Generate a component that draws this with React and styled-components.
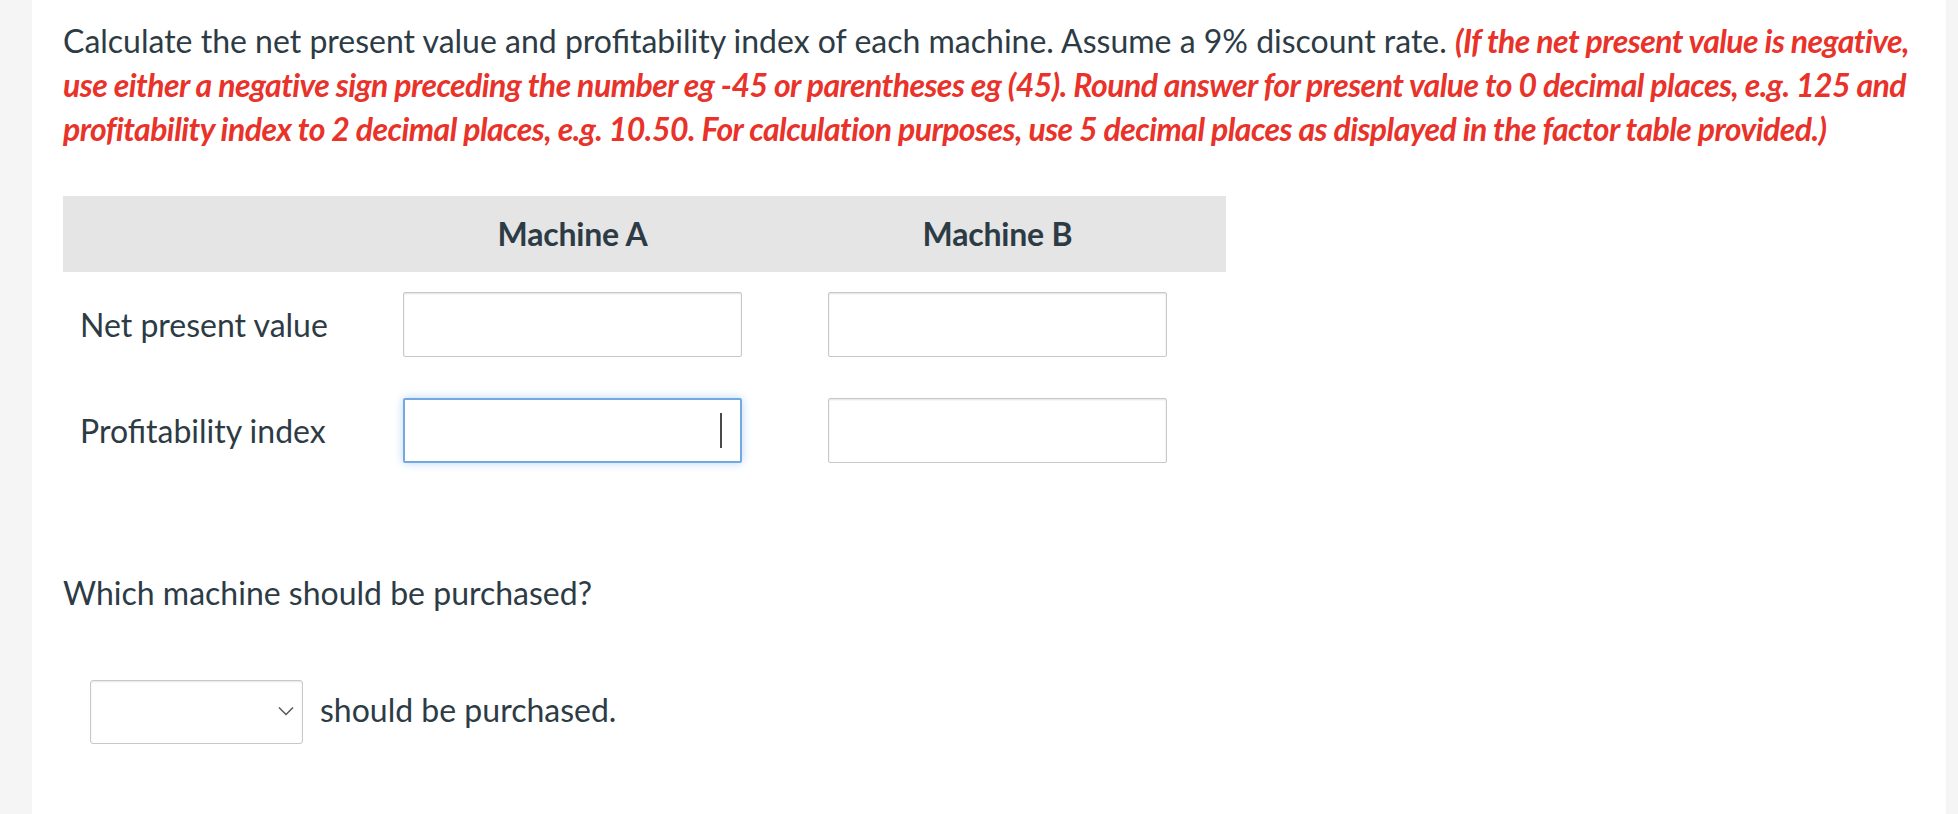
import React from "react";
import styled, { createGlobalStyle } from "styled-components";

const Global = createGlobalStyle`
  html, body { margin: 0; padding: 0; background: #ffffff; }
  body { font-family: Lato, "Open Sans", sans-serif; color: #2d3b45; }
`;

const Page = styled.div`
  display: flex;
  height: 814px;
  width: 1958px;
  overflow: hidden;
`;

const Strip = styled.div`
  width: ${(p) => p.$w}px;
  flex: none;
  background: #f5f5f5;
`;

const Main = styled.main`
  flex: 1;
  background: #ffffff;
  padding: 19px 31px 0 31px;
  box-sizing: border-box;
`;

const Prompt = styled.p`
  margin: 0;
  font-size: 32px;
  line-height: 44px;
`;

const Red = styled.em`
  color: #e8322a;
  font-weight: 700;
  font-style: italic;
  letter-spacing: -0.55px;
`;

const Table = styled.div`
  margin-top: 45px;
  width: 1163px;
`;

const Grid = styled.div`
  display: grid;
  grid-template-columns: 297px 425px 425px;
  padding-right: 16px;
  align-items: center;
`;

const Header = styled(Grid)`
  height: 76px;
  background: #e5e5e5;
`;

const HeadCell = styled.div`
  text-align: center;
  font-size: 32px;
  font-weight: 700;
  line-height: 44px;
  letter-spacing: -0.2px;
`;

const Body = styled.div`
  display: flex;
  flex-direction: column;
  gap: 41px;
  margin-top: 20px;
`;

const RowLabel = styled.div`
  padding-left: 17px;
  font-size: 32px;
  line-height: 44px;
`;

const Cell = styled.div`
  display: flex;
  justify-content: center;
`;

const Field = styled.div`
  position: relative;
  width: 339px;
  height: 65px;
  box-sizing: border-box;
  background: #fff;
  border-radius: 2px;
  border: ${(p) => (p.$focus ? "2px solid #74a8e2" : "1px solid #c8c8c8")};
  box-shadow: ${(p) =>
    p.$focus
      ? "0 0 10px rgba(102, 165, 235, 0.45)"
      : "inset 0 1px 2px rgba(0, 0, 0, 0.12)"};
`;

const Caret = styled.span`
  position: absolute;
  left: 315px;
  top: 13px;
  width: 2px;
  height: 35px;
  background: #4a4a4a;
`;

const Question = styled.p`
  margin: 108px 0 0 0;
  font-size: 32px;
  line-height: 44px;
`;

const AnswerRow = styled.div`
  display: flex;
  align-items: center;
  gap: 17px;
  margin: 65px 0 0 27px;
  font-size: 32px;
  line-height: 44px;
`;

const AnswerText = styled.span`
  margin-top: -4px;
`;

const Select = styled.div`
  position: relative;
  width: 213px;
  height: 64px;
  box-sizing: border-box;
  border: 1px solid #c8c8c8;
  border-radius: 3px;
  box-shadow: inset 0 1px 2px rgba(0, 0, 0, 0.1);
  background: #fff;
  display: flex;
  align-items: center;
  justify-content: flex-end;
  padding: 0 8px 2px 0;
`;

const Chevron = () => (
  <svg width="16" height="10" viewBox="0 0 16 10">
    <path d="M1 1.5 L8 8.5 L15 1.5" fill="none" stroke="#555" strokeWidth="1.5" />
  </svg>
);

export default function App() {
  return (
    <>
      <Global />
      <Page>
        <Strip $w={32} />
        <Main>
          <Prompt>
            Calculate the net present value and profitability index of each machine. Assume a 9% discount rate.{" "}
            <Red>
              (If the net present value is negative, use either a negative sign preceding the number eg -45 or parentheses eg (45). Round answer for present value to 0 decimal places, e.g. 125 and profitability index to 2 decimal places, e.g. 10.50. For calculation purposes, use 5 decimal places as displayed in the factor table provided.)
            </Red>
          </Prompt>
          <Table>
            <Header>
              <div />
              <HeadCell>Machine A</HeadCell>
              <HeadCell>Machine B</HeadCell>
            </Header>
            <Body>
              <Grid>
                <RowLabel>Net present value</RowLabel>
                <Cell><Field /></Cell>
                <Cell><Field /></Cell>
              </Grid>
              <Grid>
                <RowLabel>Profitability index</RowLabel>
                <Cell>
                  <Field $focus>
                    <Caret />
                  </Field>
                </Cell>
                <Cell><Field /></Cell>
              </Grid>
            </Body>
          </Table>
          <Question>Which machine should be purchased?</Question>
          <AnswerRow>
            <Select>
              <Chevron />
            </Select>
            <AnswerText>should be purchased.</AnswerText>
          </AnswerRow>
        </Main>
        <Strip $w={12} />
      </Page>
    </>
  );
}
